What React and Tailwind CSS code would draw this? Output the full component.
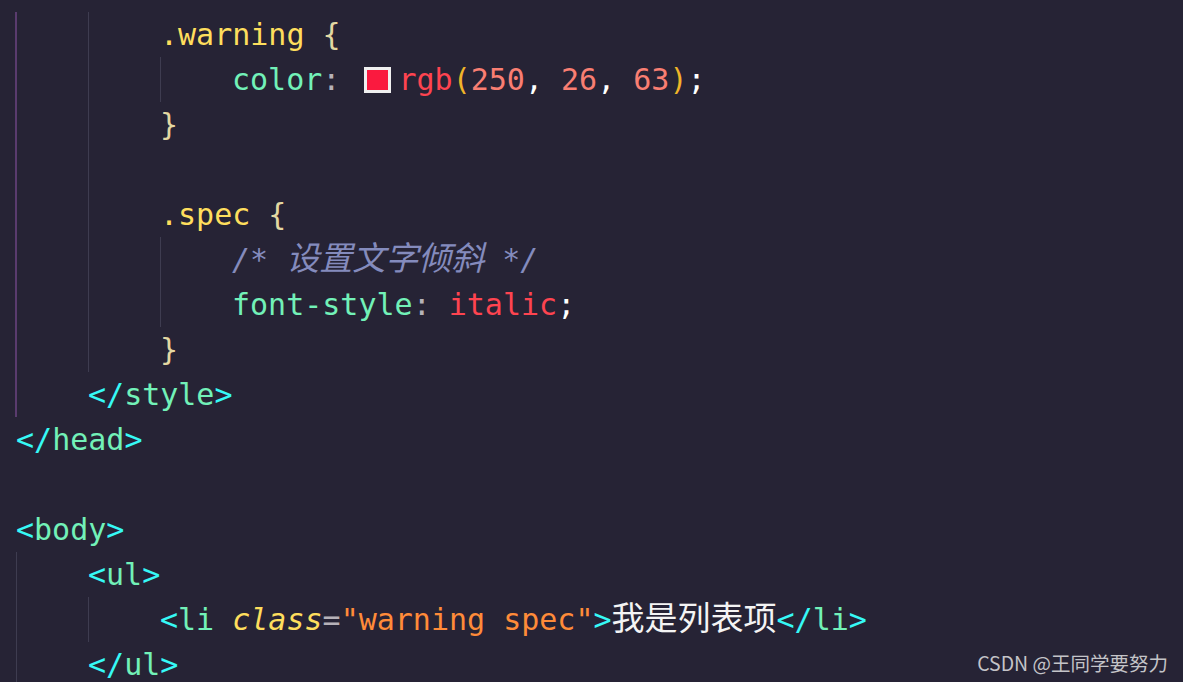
import React from "react";

const C = {
  br: "text-[#36f9f6]",
  tag: "text-[#72f1b8]",
  sel: "text-[#fede5d]",
  brace: "text-[#e3d8a2]",
  prop: "text-[#72f1b8]",
  punc: "text-[#b6b1b8]",
  fn: "text-[#fe4450]",
  paren: "text-[#f0b429]",
  num: "text-[#f97e72]",
  white: "text-[#ffffff]",
  str: "text-[#ff8b39]",
  attr: "text-[#fede5d] italic",
  cmt: "text-[#848bbd] italic",
};

function S({ c, children }) {
  return <span className={c}>{children}</span>;
}

function Cjk({ c = "", children }) {
  return (
    <span
      className={`${c} text-[33px] leading-none`}
      style={{ fontFamily: '"Noto Sans CJK SC", sans-serif' }}
    >
      {children}
    </span>
  );
}

function Line({ indent = 0, guides = [], children }) {
  const cells = [];
  for (let i = 0; i < indent; i++) {
    const g = guides[i];
    cells.push(
      <span
        key={i}
        className={
          "block h-[45px] w-[72px] shrink-0 " +
          (g === "p"
            ? "border-l-2 border-[#5a3b6e] -ml-[1px] w-[73px]"
            : g === "g"
            ? "border-l border-[#3e3c50]"
            : "")
        }
      />
    );
  }
  return (
    <div className="flex h-[45px]">
      {cells}
      <div className="whitespace-pre">{children}</div>
    </div>
  );
}

export default function App() {
  return (
    <div
      className="relative h-[682px] w-[1183px] overflow-hidden bg-[#262335] pl-4 pt-[12px] text-[30px] leading-[45px]"
      style={{ fontFamily: '"DejaVu Sans Mono", "Liberation Mono", monospace' }}
    >
      <Line indent={2} guides={["p", "g"]}>
        <S c={C.sel}>.warning</S>
        <S c={C.brace}>{" {"}</S>
      </Line>
      <Line indent={3} guides={["p", "g", "g"]}>
        <S c={C.prop}>color</S>
        <S c={C.punc}>{": "}</S>
        <span className="ml-[6px] mr-[7px] inline-block h-[26px] w-[27px] border-[3px] border-[#f0f0f0] bg-[#fa1a3f] align-[-3px]" />
        <S c={C.fn}>rgb</S>
        <S c={C.paren}>(</S>
        <S c={C.num}>250</S>
        <S c={C.white}>{", "}</S>
        <S c={C.num}>26</S>
        <S c={C.white}>{", "}</S>
        <S c={C.num}>63</S>
        <S c={C.paren}>)</S>
        <S c={C.white}>;</S>
      </Line>
      <Line indent={2} guides={["p", "g"]}>
        <S c={C.brace}>{"}"}</S>
      </Line>
      <Line indent={2} guides={["p", "g"]} />
      <Line indent={2} guides={["p", "g"]}>
        <S c={C.sel}>.spec</S>
        <S c={C.brace}>{" {"}</S>
      </Line>
      <Line indent={3} guides={["p", "g", "g"]}>
        <S c={C.cmt}>{"/* "}</S>
        <Cjk c={C.cmt}>设置文字倾斜</Cjk>
        <S c={C.cmt}>{" */"}</S>
      </Line>
      <Line indent={3} guides={["p", "g", "g"]}>
        <S c={C.prop}>font-style</S>
        <S c={C.punc}>{": "}</S>
        <S c={C.fn}>italic</S>
        <S c={C.white}>;</S>
      </Line>
      <Line indent={2} guides={["p", "g"]}>
        <S c={C.brace}>{"}"}</S>
      </Line>
      <Line indent={1} guides={["p"]}>
        <S c={C.br}>{"</"}</S>
        <S c={C.tag}>style</S>
        <S c={C.br}>{">"}</S>
      </Line>
      <Line>
        <S c={C.br}>{"</"}</S>
        <S c={C.tag}>head</S>
        <S c={C.br}>{">"}</S>
      </Line>
      <Line />
      <Line>
        <S c={C.br}>{"<"}</S>
        <S c={C.tag}>body</S>
        <S c={C.br}>{">"}</S>
      </Line>
      <Line indent={1} guides={["g"]}>
        <S c={C.br}>{"<"}</S>
        <S c={C.tag}>ul</S>
        <S c={C.br}>{">"}</S>
      </Line>
      <Line indent={2} guides={["g", "g"]}>
        <S c={C.br}>{"<"}</S>
        <S c={C.tag}>{"li "}</S>
        <S c={C.attr}>class</S>
        <S c={C.punc}>=</S>
        <S c={C.str}>"warning spec"</S>
        <S c={C.br}>{">"}</S>
        <Cjk c="text-[#f4f4f4]">我是列表项</Cjk>
        <S c={C.br}>{"</"}</S>
        <S c={C.tag}>li</S>
        <S c={C.br}>{">"}</S>
      </Line>
      <Line indent={1} guides={["g"]}>
        <S c={C.br}>{"</"}</S>
        <S c={C.tag}>ul</S>
        <S c={C.br}>{">"}</S>
      </Line>
      <div
        className="absolute bottom-[6px] right-[15px] text-[19.5px] leading-[26px] text-[#c4c4c8]"
        style={{ fontFamily: '"Noto Sans CJK SC", "Noto Sans", sans-serif' }}
      >
        CSDN @王同学要努力
      </div>
    </div>
  );
}
